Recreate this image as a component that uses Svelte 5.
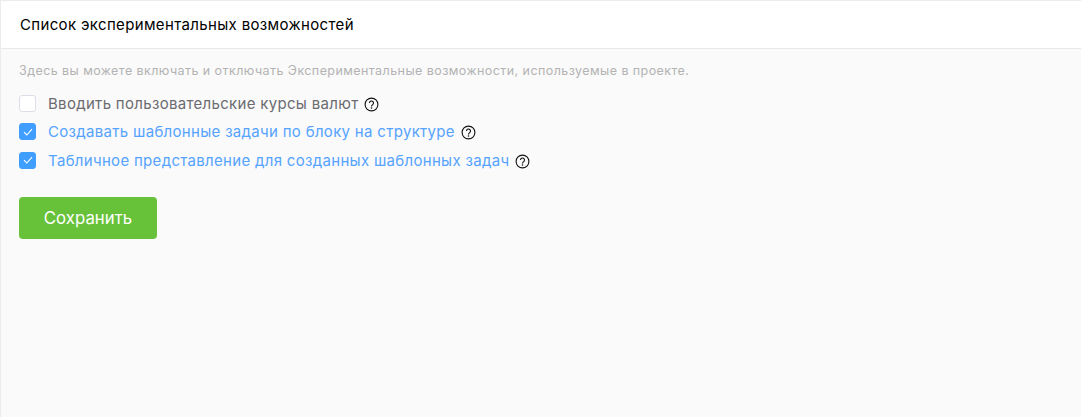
<script>
  const items = [
    { label: 'Вводить пользовательские курсы валют', on: false },
    { label: 'Создавать шаблонные задачи по блоку на структуре', on: true },
    { label: 'Табличное представление для созданных шаблонных задач', on: true }
  ];
</script>

<div class="page">
  <header class="head"><h1>Список экспериментальных возможностей</h1></header>
  <main class="body">
    <p class="hint">Здесь вы можете включать и отключать Экспериментальные возможности, используемые в проекте.</p>
    <ul class="list">
      {#each items as item}
        <li class="row" class:on={item.on}>
          <span class="box">
            {#if item.on}
              <svg width="12" height="10" viewBox="0 0 12 10"><path d="M2 5.2 4.8 8 10 2.2" fill="none" stroke="#fff" stroke-width="1.1"/></svg>
            {/if}
          </span>
          <span class="label">{item.label}</span>
          <svg class="help" width="15" height="15" viewBox="0 0 15 15">
            <circle cx="7.5" cy="7.5" r="6.4" fill="none" stroke="#111" stroke-width="1.1"/>
            <path d="M5.5 6a2 2 0 1 1 3.2 1.6c-.8.6-1.2.9-1.2 1.8" fill="none" stroke="#111" stroke-width="1.1"/>
            <circle cx="7.5" cy="11" r=".8" fill="#111"/>
          </svg>
        </li>
      {/each}
    </ul>
    <button class="save">Сохранить</button>
  </main>
</div>

<style>
  :global(body) { margin: 0; background: #fafafa; }
  .page {
    height: 417px;
    box-sizing: border-box;
    border-top: 1px solid #ececec;
    border-left: 1px solid #ececec;
    font-family: Inter, Roboto, sans-serif;
    display: flex;
    flex-direction: column;
  }
  .head {
    height: 48px;
    box-sizing: border-box;
    background: #fff;
    border-bottom: 1px solid #e8e8e8;
    padding: 0 19px;
    display: flex;
    align-items: center;
  }
  h1 { margin: 0; font-size: 15px; font-weight: 400; color: #000; letter-spacing: 0.35px; }
  .body { padding: 14px 18px; }
  .hint { margin: 0; font-size: 12.5px; line-height: 16px; color: #b3b3b3; letter-spacing: 0.43px; }
  .list { list-style: none; margin: 10px 0 0; padding: 0; }
  .row { display: flex; align-items: center; height: 28.5px; font-size: 15px; color: #6b6b70; letter-spacing: 0.31px; }
  .row.on { color: #55a3ff; }
  .box {
    width: 17px; height: 17px; box-sizing: border-box;
    border: 1px solid #dcdfe6; border-radius: 3px; background: #fff;
    display: flex; align-items: center; justify-content: center;
    margin-right: 12px;
  }
  .on .box { background: #409eff; border-color: #409eff; }
  .help { margin-left: 6px; margin-top: 2px; }
  .save {
    margin-top: 22px; width: 138px; height: 42px;
    background: #67c23a; color: #fff; border: 0; border-radius: 4px;
    font: 400 16.8px Inter, sans-serif;
  }
</style>
